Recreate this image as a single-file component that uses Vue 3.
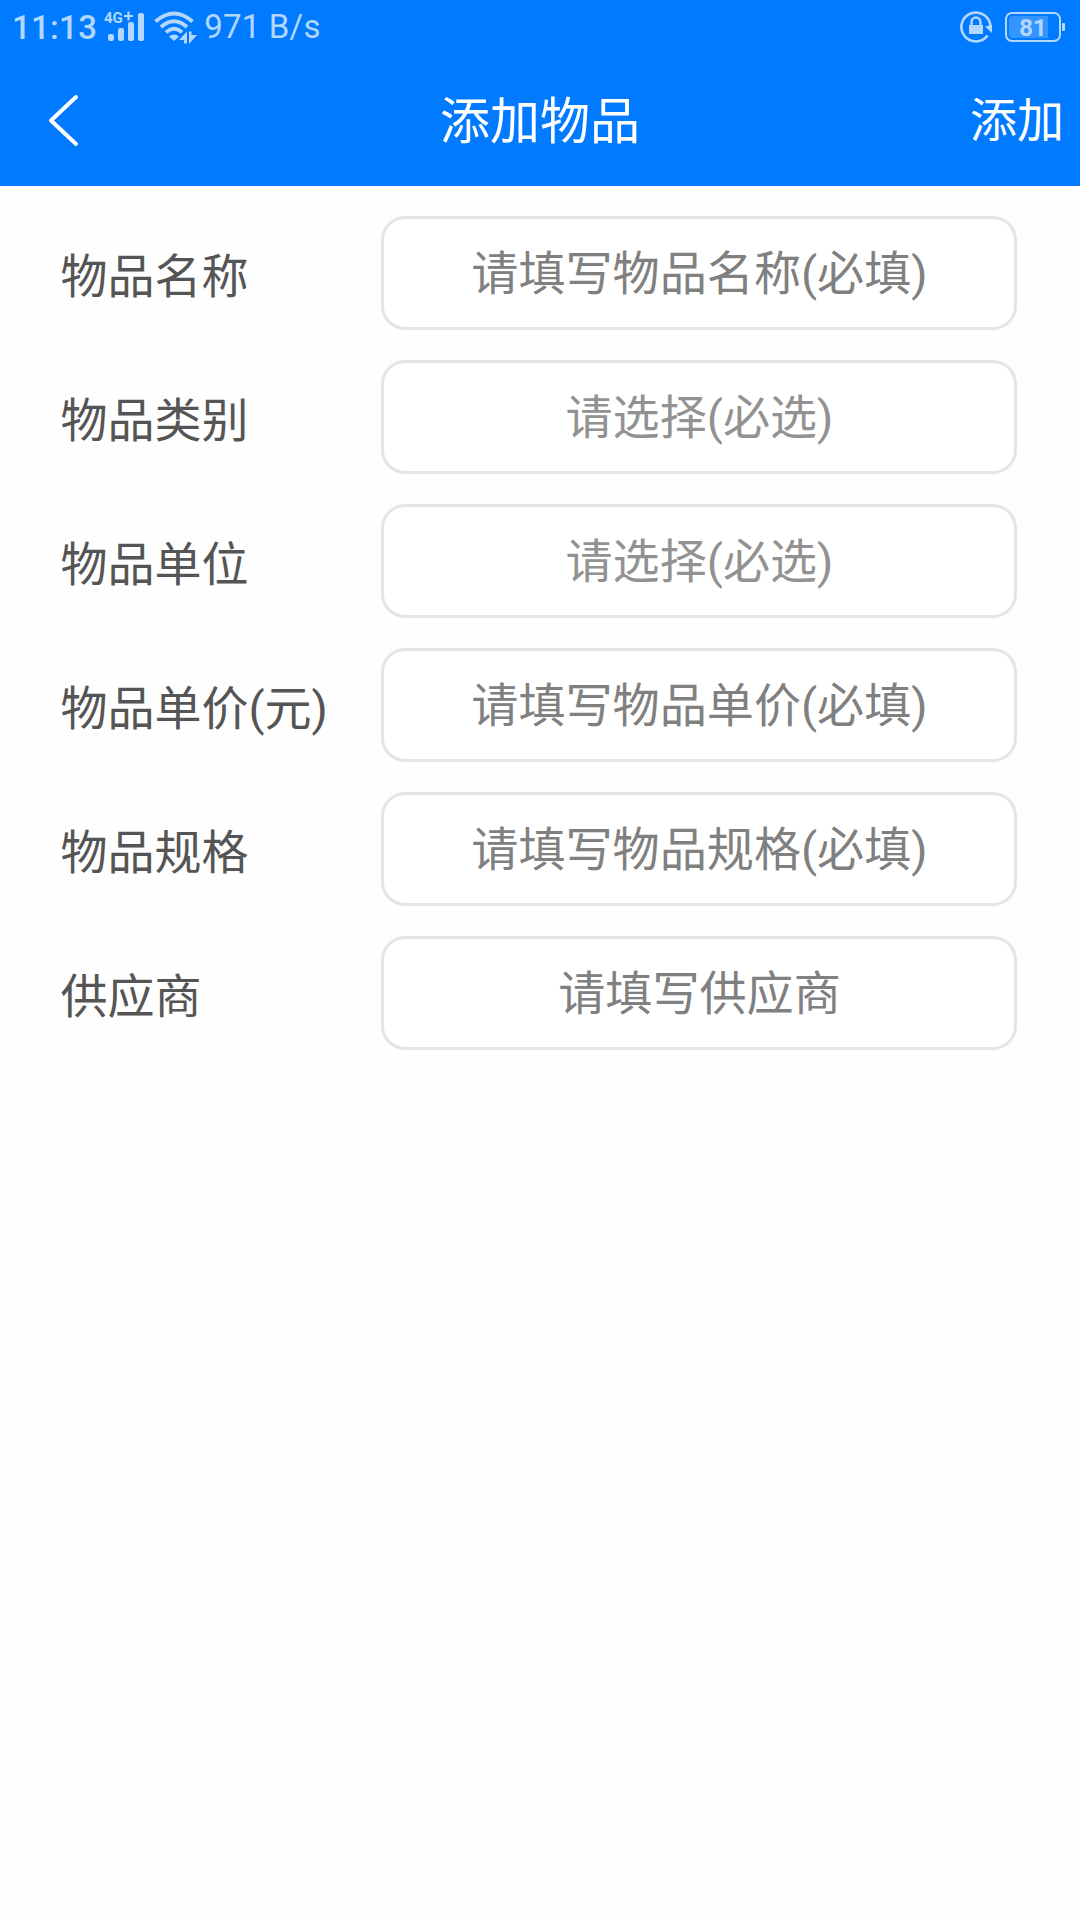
<template>
  <div class="page">
    <header class="header">
      <div class="status">
        <div class="status__side">
          <span class="status__time">11:13</span>
          <svg class="status__signal" width="40" height="40" viewBox="0 -4 40 40">
            <text x="0" y="12" class="status__net">4G</text>
            <path d="M20 5h9M24.500 0.500v9" stroke="#b3d7ff" stroke-width="2.200" fill="none" />
            <g fill="#b3d7ff">
              <rect x="4" y="23" width="6" height="7" rx="2" />
              <rect x="14" y="17" width="6" height="13" rx="2" />
              <rect x="24" y="11" width="6" height="19" rx="2" />
              <rect x="34" y="2" width="6" height="28" rx="2" />
            </g>
          </svg>
          <svg class="status__wifi" width="44" height="34" viewBox="0 0 44 34">
            <g fill="none" stroke="#b3d7ff" stroke-width="3.8">
              <path d="M1.500 11.500Q20 -4.500 38.500 11.500" />
              <path d="M7 17Q20 5.500 33 17" />
              <path d="M12 22.300Q20 15 28 22.300" />
            </g>
            <path d="M15 26.500Q20 22.500 25 26.500L20 31z" fill="#b3d7ff" />
            <path d="M25 30L33 21.500v12h-3v-3.500zM35 21.500h2.500v3.500H43l-8 9z" fill="#b3d7ff" />
          </svg>
          <span class="status__speed">971 B/s</span>
        </div>
        <div class="status__side">
          <svg width="32" height="32" viewBox="0 0 32 32">
            <path d="M27.600 24.600A14.500 14.500 0 1 1 30.400 16" fill="none" stroke="#b3d7ff" stroke-width="2.600" />
            <path d="M25 15.500L32 14v8z" fill="#b3d7ff" />
            <rect x="9" y="14" width="14" height="9" fill="#b3d7ff" />
            <path d="M11.500 14v-3a4.500 4.500 0 0 1 9 0v3" fill="none" stroke="#b3d7ff" stroke-width="2.400" />
          </svg>
          <div class="battery">
            <div class="battery__body">
              <div class="battery__level" :style="{ width: battery + '%' }"></div>
              <span class="battery__text">{{ battery }}</span>
            </div>
            <div class="battery__cap"></div>
          </div>
        </div>
      </div>
      <div class="nav">
        <button class="nav__back">
          <svg width="32" height="54" viewBox="0 0 32 54">
            <path d="M28 4L3 27.500L28 51" fill="none" stroke="#fff" stroke-width="4" stroke-linecap="round" stroke-linejoin="round" />
          </svg>
        </button>
        <h1 class="nav__title">添加物品</h1>
        <button class="nav__action">添加</button>
      </div>
    </header>

    <main class="form">
      <div v-for="field in fields" :key="field.key" class="row">
        <label class="row__label">{{ field.label }}</label>
        <div v-if="field.picker" class="row__box row__box--picker">{{ field.hint }}</div>
        <input v-else v-model="form[field.key]" class="row__box" type="text" :placeholder="field.hint" />
      </div>
    </main>
  </div>
</template>

<script setup>
import { reactive, ref } from 'vue'

const battery = ref(81)

const fields = [
  { key: 'name', label: '物品名称', hint: '请填写物品名称(必填)' },
  { key: 'type', label: '物品类别', hint: '请选择(必选)', picker: true },
  { key: 'unit', label: '物品单位', hint: '请选择(必选)', picker: true },
  { key: 'price', label: '物品单价(元)', hint: '请填写物品单价(必填)' },
  { key: 'spec', label: '物品规格', hint: '请填写物品规格(必填)' },
  { key: 'supplier', label: '供应商', hint: '请填写供应商' }
]

const form = reactive({ name: '', price: '', spec: '', supplier: '' })
</script>

<style>
body {
  background: #fefefe;
}
</style>

<style scoped>
.page {
  min-height: 1920px;
  background: #fefefe;
  font-family: Roboto, 'Noto Sans CJK SC', sans-serif;
}
.header {
  height: 186px;
  background: #007aff;
}
.status {
  height: 54px;
  display: flex;
  justify-content: space-between;
  padding: 0 15px 0 12px;
  color: #b3d7ff;
}
.status__side {
  display: flex;
  align-items: center;
}
.status__time {
  font-size: 33px;
  font-weight: 500;
  line-height: 54px;
  padding-top: 2px;
  letter-spacing: 0.3px;
}
.status__signal {
  margin-left: 7px;
}
.status__net {
  font-size: 15px;
  font-weight: 700;
  fill: #b3d7ff;
}
.status__wifi {
  margin-left: 10px;
}
.status__speed {
  font-size: 33px;
  line-height: 54px;
  margin-left: 6px;
  letter-spacing: 0.2px;
}
.battery {
  display: flex;
  align-items: center;
  margin-left: 13px;
}
.battery__body {
  position: relative;
  box-sizing: border-box;
  width: 56px;
  height: 30px;
  padding: 2px;
  border: 2px solid #b3d7ff;
  border-radius: 7px;
}
.battery__level {
  height: 100%;
  border-radius: 4px 0 0 4px;
  background: #3395ff;
}
.battery__text {
  position: absolute;
  inset: 0;
  font-size: 24px;
  font-weight: 700;
  line-height: 28px;
  text-align: center;
}
.battery__cap {
  width: 3px;
  height: 8px;
  margin-left: 1px;
  border-radius: 1px;
  background: #b3d7ff;
}
.nav {
  height: 132px;
  display: grid;
  grid-template-columns: 1fr auto 1fr;
  align-items: center;
  padding: 0 16px;
  color: #fff;
}
.nav__back,
.nav__action {
  border: 0;
  padding: 0;
  background: none;
  color: inherit;
  font-family: inherit;
}
.nav__back {
  justify-self: start;
  display: flex;
  margin-left: 32px;
}
.nav__title {
  margin: 0;
  padding-bottom: 6px;
  font-size: 50px;
  font-weight: 400;
}
.nav__action {
  justify-self: end;
  padding-bottom: 7px;
  font-size: 47px;
}
.form {
  display: flex;
  flex-direction: column;
  gap: 30px;
  padding: 30px 63px 0 60px;
}
.row {
  display: grid;
  grid-template-columns: 321px 636px;
  align-items: center;
}
.row__label {
  padding: 0 0 2px 0.5px;
  font-size: 47px;
  color: #555;
}
.row__box {
  box-sizing: border-box;
  height: 114px;
  padding: 1px 0 0 1px;
  border: 3px solid #e5e5e5;
  border-radius: 24px;
  background: #fff;
  font-family: inherit;
  font-size: 47.1px;
  text-align: center;
  outline: none;
}
.row__box::placeholder {
  color: #808080;
}
.row__box--picker {
  line-height: 108px;
  color: #929292;
}
</style>
